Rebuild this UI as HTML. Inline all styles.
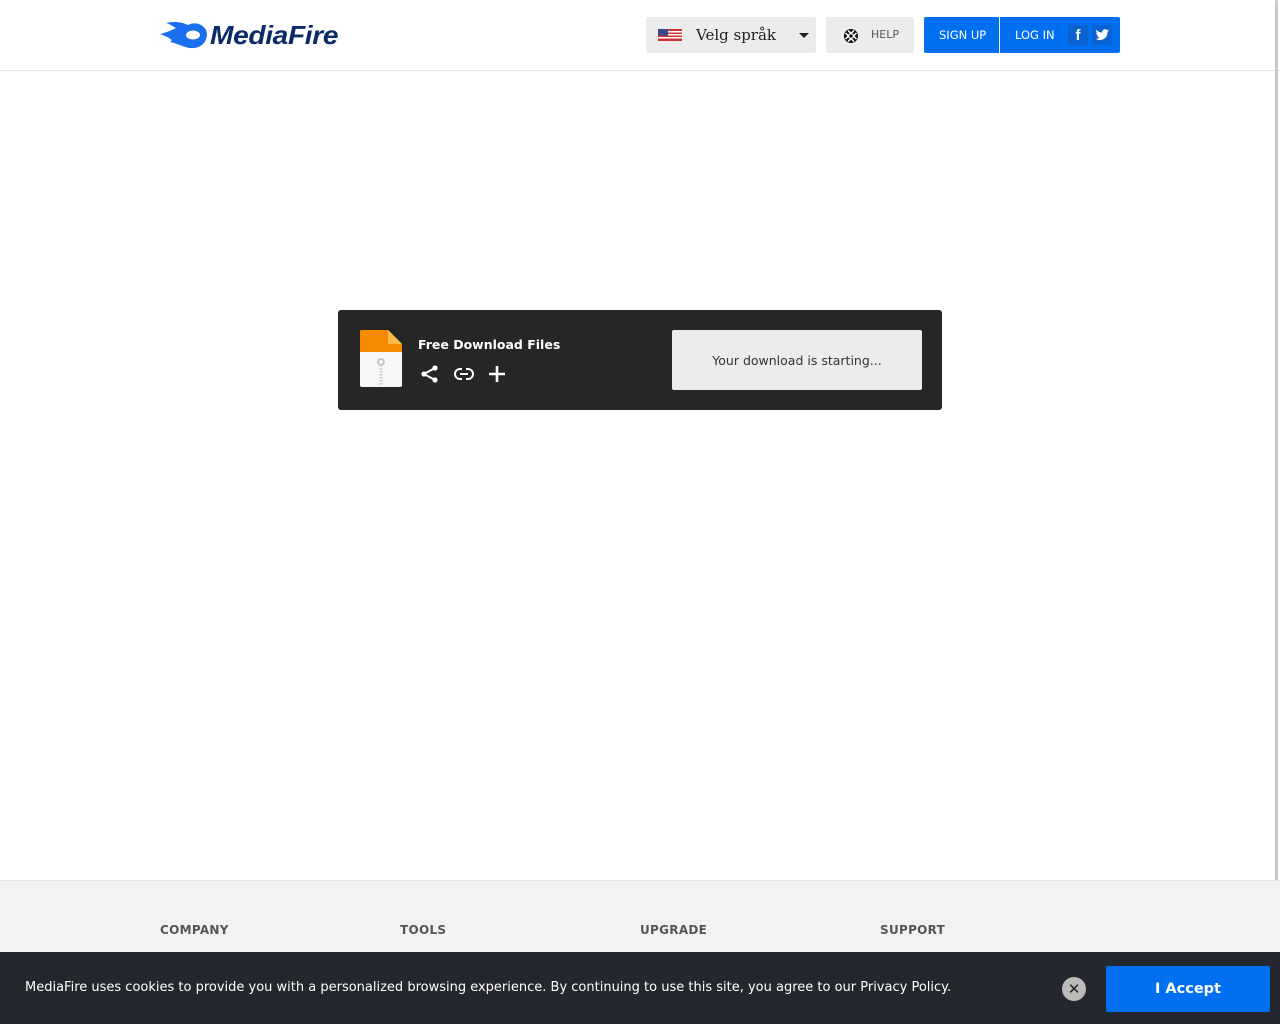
<!DOCTYPE html>
<html><head><meta charset="utf-8"><style>
*{box-sizing:border-box;margin:0;padding:0}
body{width:1280px;height:1024px;overflow:hidden;background:#fff;font-family:"DejaVu Sans","Liberation Sans",sans-serif;position:relative}
.hdr{position:absolute;left:0;top:0;width:1280px;height:71px;border-bottom:1px solid #e3e3e3;background:#fff}
.logo{position:absolute;left:160px;top:20px}
.logo span{position:absolute;left:50px;top:0px;font:italic bold 26px "Liberation Sans",sans-serif;color:#0b2a6a;letter-spacing:-0.3px;transform:scaleX(1.08);transform-origin:left;white-space:nowrap}
.lang{position:absolute;left:646px;top:17px;width:170px;height:36px;background:#ececec;border-radius:2px}
.lang .t{position:absolute;left:50px;top:9px;font:15px "DejaVu Serif","Liberation Serif",serif;color:#222}
.help{position:absolute;left:826px;top:17px;width:88px;height:36px;background:#ececec;border-radius:2px;font-size:11px;color:#555}
.blue{position:absolute;left:924px;top:17px;width:196px;height:36px;background:#0070f0;border-radius:2px;color:#fff;font-size:11.5px}
.card{position:absolute;left:338px;top:310px;width:604px;height:100px;background:#262626;border-radius:3px}
.dl{position:absolute;left:334px;top:20px;width:250px;height:60px;background:#ececec;border-radius:2px;font-size:12.5px;color:#333;text-align:center;line-height:62px}
.foot{position:absolute;left:0;top:880px;width:1280px;height:144px;background:#f2f2f2;border-top:1px solid #e6e6e6}
.foot b{position:absolute;top:42px;font-size:12px;color:#555;letter-spacing:.3px}
.ck{position:absolute;left:0;top:952px;width:1280px;height:72px;background:#24272d}
.ck p{position:absolute;left:25px;top:28px;font-size:13px;color:#fff}
.acc{position:absolute;left:1106px;top:14px;width:164px;height:46px;background:#0070f0;border-radius:2px;color:#fff;font-weight:bold;font-size:14.5px;text-align:center;line-height:47px}
.x{position:absolute;left:1062px;top:25px;width:24px;height:24px;border-radius:50%;background:#bbb;color:#222;text-align:center;line-height:24px;font-size:15px;font-weight:bold}
.sb{position:absolute;left:1275px;top:0;width:3px;height:900px;background:#c8c8c8;border-radius:2px}
</style></head><body>
<div class="hdr">
 <div class="logo">
  <svg width="48" height="30" viewBox="0 0 48 30"><path d="M0 14 C8 12 12 10 16 8 C12 6 10 4 6 3 C14 1 22 2 28 5 C34 2 42 3 46 10 C49 18 44 27 34 28 C26 29 20 24 10 22 C14 20 10 18 0 14Z" fill="#1a6ef0"/><ellipse cx="33" cy="15" rx="7" ry="4.5" fill="#fff"/></svg>
  <span>MediaFire</span>
 </div>
 <div class="lang">
  <svg style="position:absolute;left:12px;top:12px" width="24" height="12"><rect width="24" height="12" fill="#c33"/><rect y="2" width="24" height="1.5" fill="#fff"/><rect y="5" width="24" height="1.5" fill="#fff"/><rect y="8" width="24" height="1.5" fill="#fff"/><rect width="10" height="6.5" fill="#3b4a8c"/></svg>
  <span class="t">Velg språk</span>
  <div style="position:absolute;left:153px;top:16px;border:5px solid transparent;border-top:5px solid #222;border-bottom:0"></div>
 </div>
 <div class="help">
  <svg style="position:absolute;left:17px;top:11px" width="16" height="16" viewBox="0 0 16 16"><circle cx="8" cy="8" r="7" fill="#111"/><circle cx="8" cy="8" r="3" fill="#fff"/><circle cx="8" cy="8" r="1.8" fill="#111"/><path d="M5 2.5L8 5.5L11 2.5M13.5 5L10.5 8L13.5 11M11 13.5L8 10.5L5 13.5M2.5 11L5.5 8L2.5 5" stroke="#fff" stroke-width="1.5" fill="none"/></svg>
  <span style="position:absolute;left:45px;top:11px">HELP</span>
 </div>
 <div class="blue">
  <span style="position:absolute;left:15px;top:11px">SIGN UP</span>
  <div style="position:absolute;left:75px;top:0;width:1px;height:36px;background:#fff"></div>
  <span style="position:absolute;left:91px;top:11px">LOG IN</span>
  <div style="position:absolute;left:144px;top:8px;width:20px;height:20px;background:#0a62d0;color:#fff;font:bold 15px 'Liberation Sans';text-align:center;line-height:21px">f</div>
  <svg style="position:absolute;left:168px;top:8px" width="20" height="20" viewBox="0 0 20 20"><rect width="20" height="20" fill="#0a62d0"/><path d="M17 5.5c-.5.2-1 .4-1.6.4.6-.3 1-.9 1.2-1.5-.5.3-1.1.6-1.7.7a2.7 2.7 0 0 0-4.6 2.5A7.7 7.7 0 0 1 4.6 4.7a2.7 2.7 0 0 0 .8 3.6c-.4 0-.9-.1-1.2-.3 0 1.3.9 2.4 2.200 2.7-.4.1-.8.1-1.2 0 .3 1.1 1.3 1.9 2.5 1.900A5.5 5.5 0 0 1 3.6 13.8 7.7 7.7 0 0 0 15.5 7.3V7c.6-.4 1.1-.9 1.5-1.5z" fill="#fff"/></svg>
 </div>
</div>
<div class="sb"></div>
<div class="card">
 <svg style="position:absolute;left:22px;top:20px" width="42" height="57" viewBox="0 0 42 57"><path d="M2 0H28L42 14V55Q42 57 40 57H2Q0 57 0 55V2Q0 0 2 0Z" fill="#f7f7f7"/><path d="M2 0H28L42 14V22H0V2Q0 0 2 0Z" fill="#f68a00"/><path d="M28 0V12Q28 14 30 14H42Z" fill="#ffb84a"/><circle cx="21" cy="32" r="3" fill="none" stroke="#bbb" stroke-width="1.5"/><path d="M21 35V55" stroke="#ccc" stroke-width="3" stroke-dasharray="1.5 1.5"/></svg>
 <div style="position:absolute;left:80px;top:27px;color:#fff;font-weight:bold;font-size:12.5px">Free Download Files</div>
 <svg style="position:absolute;left:82px;top:54px" width="20" height="20" viewBox="0 0 20 20"><circle cx="15" cy="4" r="2.6" fill="#fff"/><circle cx="4" cy="10" r="2.6" fill="#fff"/><circle cx="15" cy="16" r="2.6" fill="#fff"/><path d="M15 4L4 10L15 16" stroke="#fff" stroke-width="2" fill="none"/></svg>
 <svg style="position:absolute;left:115px;top:55px" width="22" height="18" viewBox="0 0 22 18"><rect x="2" y="4" width="18" height="10" rx="5" fill="none" stroke="#fff" stroke-width="2"/><rect x="9" y="2" width="4" height="14" fill="#262626"/><path d="M7 9H15" stroke="#fff" stroke-width="2"/></svg>
 <svg style="position:absolute;left:150px;top:55px" width="18" height="18"><path d="M9 1V17M1 9H17" stroke="#fff" stroke-width="2.6"/></svg>
 <div class="dl">Your download is starting...</div>
</div>
<div class="foot">
 <b style="left:160px">COMPANY</b><b style="left:400px">TOOLS</b><b style="left:640px">UPGRADE</b><b style="left:880px">SUPPORT</b>
</div>
<div class="ck">
 <p>MediaFire uses cookies to provide you with a personalized browsing experience. By continuing to use this site, you agree to our Privacy Policy.</p>
 <div class="x">✕</div>
 <div class="acc">I Accept</div>
</div>
</body></html>
